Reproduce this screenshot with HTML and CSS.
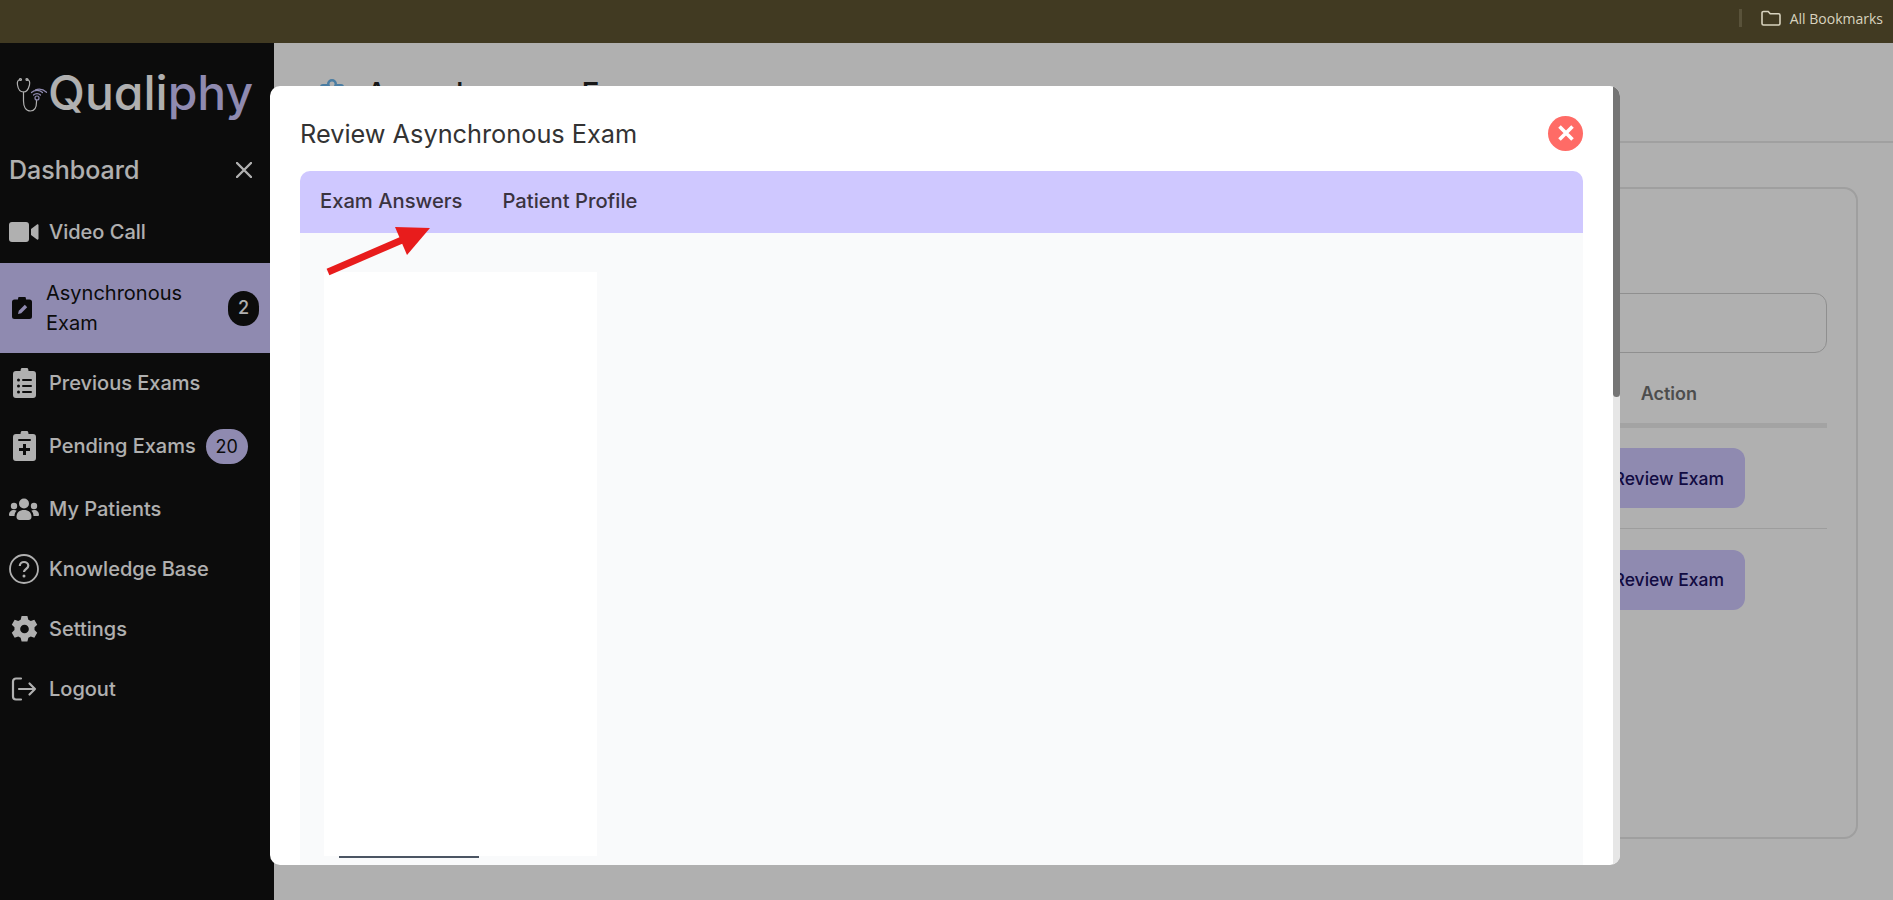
FILE: index.html
```html
<!DOCTYPE html>
<html lang="en">
<head>
<meta charset="utf-8">
<title>Qualiphy - Asynchronous Exam</title>
<link rel="stylesheet" href="styles.css">
</head>
<body>
<div class="bookmarks">
  <span class="bm-sep"></span>
  <svg class="bm-folder" viewBox="0 0 20 16" width="20" height="16"><path d="M1 3a1.500 1.500 0 0 1 1.500-1.500h4.700l2 2.200h8.300a1.500 1.500 0 0 1 1.500 1.500v8.300a1.500 1.500 0 0 1-1.500 1.500h-15a1.500 1.500 0 0 1-1.500-1.500z" fill="none" stroke="currentColor" stroke-width="1.600"/></svg>
  <span class="bm-label">All Bookmarks</span>
</div>
<div class="app">
  <aside class="sidebar">
    <div class="logo">
      <svg class="logo-mark" viewBox="0 0 32 36" width="32" height="36">
        <g fill="none" stroke="#fff" stroke-width="1.200" stroke-linecap="round">
          <path d="M4 2.500C1.500 3 1 5 1.500 8c.6 4 3 7 6 7s5-3 6-7c.6-3 0-5-2.500-5.500"/>
          <path d="M7.500 15v9c0 5 2 10 7 10s6-4 6-9v-2"/>
          <circle cx="4.500" cy="2.500" r="1"/><circle cx="11" cy="2.500" r="1"/>
        </g>
        <g fill="none" stroke="#cfc8ff" stroke-width="1.200" stroke-linecap="round">
          <circle cx="21" cy="21" r="2"/>
          <path d="M17.500 18a5 5 0 0 1 7 0"/><path d="M15.500 15.500a8 8 0 0 1 11 0"/><path d="M19.500 12.800a11 11 0 0 1 11 2.500"/>
        </g>
      </svg>
      <span class="logo-text">Quali<span class="logo-accent">phy</span></span>
    </div>
    <div class="dash-row">
      <span class="dash-title">Dashboard</span>
      <svg class="dash-close" viewBox="0 0 16 16" width="16" height="16"><path d="M1 1l14 14M15 1L1 15" stroke="currentColor" stroke-width="2.400" stroke-linecap="round"/></svg>
    </div>
    <nav class="nav">
      <a class="nav-item">
        <span class="nav-icon"><svg viewBox="0 0 30 20" width="30" height="20"><rect x="0" y="0" width="20" height="20" rx="3" fill="currentColor"/><path d="M22 7l6-4.500c.8-.5 1.500 0 1.500 1v13c0 1-.7 1.500-1.500 1L22 13z" fill="currentColor"/></svg></span>
        <span>Video Call</span>
      </a>
      <a class="nav-item nav-active">
        <span class="nav-icon nav-icon-active"><svg viewBox="0 0 20 22" width="20" height="22"><path d="M2.500 2.500H6a4 4 0 0 1 8 0h3.500A2.500 2.500 0 0 1 20 5v14.500a2.500 2.500 0 0 1-2.500 2.500h-15A2.500 2.500 0 0 1 0 19.500V5a2.500 2.500 0 0 1 2.500-2.500z" fill="currentColor"/><path d="M6 17l.8-3.200 6-6 2.400 2.400-6 6z" fill="#cfc8ff"/></svg></span>
        <span class="nav-label-wrap">Asynchronous Exam</span>
        <span class="badge badge-dark">2</span>
      </a>
      <a class="nav-item">
        <span class="nav-icon"><svg viewBox="0 0 23 30" width="23" height="30"><path d="M3 3h4.500a4 4 0 0 1 8 0H20a3 3 0 0 1 3 3v21a3 3 0 0 1-3 3H3a3 3 0 0 1-3-3V6a3 3 0 0 1 3-3z" fill="currentColor"/><g fill="#121212"><circle cx="5.500" cy="12" r="1.500"/><circle cx="5.500" cy="18" r="1.500"/><circle cx="5.500" cy="24" r="1.500"/><rect x="9" y="11" width="10" height="2" rx="1"/><rect x="9" y="17" width="10" height="2" rx="1"/><rect x="9" y="23" width="10" height="2" rx="1"/></g></svg></span>
        <span>Previous Exams</span>
      </a>
      <a class="nav-item nav-pending">
        <span class="nav-icon"><svg viewBox="0 0 23 30" width="23" height="30"><path d="M3 3h4.500a4 4 0 0 1 8 0H20a3 3 0 0 1 3 3v21a3 3 0 0 1-3 3H3a3 3 0 0 1-3-3V6a3 3 0 0 1 3-3z" fill="currentColor"/><g fill="#121212"><rect x="5" y="8" width="13" height="2" rx="1"/><path d="M10 13h3v4h4v3h-4v4h-3v-4H6v-3h4z"/></g></svg></span>
        <span>Pending Exams</span>
        <span class="badge badge-light">20</span>
      </a>
      <a class="nav-item">
        <span class="nav-icon"><svg viewBox="0 0 30 22" width="30" height="22"><g fill="currentColor"><circle cx="15" cy="5.500" r="5"/><circle cx="5" cy="8" r="3.200"/><circle cx="25" cy="8" r="3.200"/><path d="M7.500 19c0-4.500 3-7 7.500-7s7.500 2.500 7.500 7c0 2-1.500 3-3 3h-9c-1.500 0-3-1-3-3z"/><path d="M0 17c0-3 2-5 5-5 1 0 2 .3 2.700.8C6.300 14 5.500 16 5.500 18H1.500C.6 18 0 17.800 0 17zM30 17c0-3-2-5-5-5-1 0-2 .3-2.700.8 1.400 1.200 2.200 3.200 2.200 5.200h4c.9 0 1.500-.2 1.500-1z"/></g></svg></span>
        <span>My Patients</span>
      </a>
      <a class="nav-item">
        <span class="nav-icon"><svg viewBox="0 0 30 30" width="30" height="30"><circle cx="15" cy="15" r="14" fill="none" stroke="currentColor" stroke-width="1.800"/><path d="M10.800 12c0-2.500 2-4 4.200-4s4.300 1.500 4.300 3.800c0 3.200-4.300 3.200-4.300 6.200" fill="none" stroke="currentColor" stroke-width="2.200"/><circle cx="15" cy="22" r="1.500" fill="currentColor"/></svg></span>
        <span>Knowledge Base</span>
      </a>
      <a class="nav-item">
        <span class="nav-icon"><svg viewBox="0 0 28 28" width="27" height="28"><path fill-rule="evenodd" fill="currentColor" d="M11 .5h6l1 3.800 2.500 1.300 3.700-1.200 3 5.200-2.800 2.700v2.800l2.800 2.700-3 5.200-3.700-1.200-2.500 1.300-1 3.800h-6l-1-3.800-2.500-1.300-3.700 1.200-3-5.200 2.800-2.700v-2.800L.8 9.600l3-5.200 3.700 1.200L10 4.300zM14 9.500a4.500 4.500 0 1 0 0 9 4.500 4.500 0 0 0 0-9z"/></svg></span>
        <span>Settings</span>
      </a>
      <a class="nav-item">
        <span class="nav-icon"><svg viewBox="0 0 26 24" width="26" height="24"><g fill="none" stroke="currentColor" stroke-width="2.200" stroke-linecap="round" stroke-linejoin="round"><path d="M10 1.500H5a3 3 0 0 0-3 3v15a3 3 0 0 0 3 3h5"/><path d="M8 12h16M18.500 6.500L24 12l-5.500 5.500"/></g></svg></span>
        <span>Logout</span>
      </a>
    </nav>
  </aside>
  <main class="main">
    <header class="page-head">
      <svg class="page-icon" viewBox="0 0 24 30" width="24" height="30"><path d="M3 6h4a5 5 0 0 1 10 0h4a3 3 0 0 1 3 3v18a3 3 0 0 1-3 3H3a3 3 0 0 1-3-3V9a3 3 0 0 1 3-3z" fill="#6cb6ec"/><circle cx="12" cy="6" r="2.500" fill="#fff"/></svg>
      <h1 class="page-title">Asynchronous Exam</h1>
    </header>
    <section class="card">
      <div class="search-box"></div>
      <div class="table-head"><span class="th-action">Action</span></div>
      <div class="table-row"><button class="review-btn">Review Exam</button></div>
      <div class="table-row"><button class="review-btn">Review Exam</button></div>
    </section>
  </main>
  <div class="overlay">
    <div class="modal">
      <div class="modal-scroll">
        <div class="modal-head">
          <h2 class="modal-title">Review Asynchronous Exam</h2>
          <span class="modal-close"><svg viewBox="0 0 16 16" width="16" height="16"><path d="M1.500 1.500l13 13M14.500 1.500l-13 13" stroke="#fff" stroke-width="3.600"/></svg></span>
        </div>
        <div class="tabs"><span class="tab">Exam Answers</span><span class="tab">Patient Profile</span></div>
        <div class="tab-body">
          <div class="answer-sheet"></div>
          <div class="answer-rule"></div>
        </div>
      </div>
      <div class="scrollbar"><div class="scroll-thumb"></div></div>
    </div>
    <svg class="arrow" viewBox="0 0 110 50" width="110" height="50"><path d="M2 46L76 14" stroke="#e81c1c" stroke-width="7" fill="none"/><path d="M69 1l35 1-23 27z" fill="#e81c1c"/></svg>
  </div>
</div>
</body>
</html>
```
FILE: styles.css
```css
* { box-sizing: border-box; }
html, body { margin: 0; height: 100%; overflow: hidden; }
body { font-family: Inter, "Liberation Sans", sans-serif; background: #fff; display: flex; flex-direction: column; }

.bookmarks { height: 43px; flex: none; background: #413a22; color: #d8d3bf; display: flex; align-items: center; justify-content: flex-end; padding: 0 10px 7px 0; font-family: "Open Sans", "Liberation Sans", sans-serif; font-size: 14px; }
.bm-sep { width: 3px; height: 18px; background: #59523a; margin-right: 19px; }
.bm-folder { margin-right: 9px; }

.app { flex: 1; display: flex; position: relative; min-height: 0; }

.sidebar { width: 274px; flex: none; background: #121212; color: #fff; }
.logo { display: flex; align-items: center; padding: 13px 0 0 16px; height: 86px; }
.logo-mark { flex: none; margin-top: 4px; }
.logo-text { font-size: 48px; font-weight: 500; line-height: 50px; font-feature-settings: "cv11" 1; }
.logo-accent { color: #cfc8ff; }
.dash-row { display: flex; align-items: center; justify-content: space-between; padding: 23px 22px 0 9px; }
.dash-title { font-size: 25px; font-weight: 500; line-height: 36px; }
.nav { margin-top: 14px; font-size: 20px; font-weight: 500; display: flex; flex-direction: column; }
.nav-item { display: flex; align-items: center; min-height: 60px; padding-left: 9px; gap: 10px; }
.nav-pending { min-height: 66px; }
.nav-icon { width: 30px; flex: none; display: flex; justify-content: center; align-items: center; }
.nav-active { background: #cfc8ff; color: #111; font-weight: 400; min-height: 90px; margin-top: 1px; padding: 15px 15px 15px 12px; gap: 14px; line-height: 30px; }
.nav-icon-active { width: 20px; }
.nav-label-wrap { flex: 1; }
.badge { height: 35px; display: flex; align-items: center; justify-content: center; border-radius: 18px; font-size: 18px; font-weight: 400; }
.badge-dark { width: 31px; background: #121212; color: #fff; font-weight: 500; }
.badge-light { width: 42px; background: #cfc8ff; color: #111; }

.main { flex: 1; min-width: 0; background: #fff; }
.page-head { height: 100px; border-bottom: 2px solid #e8e8e8; display: flex; align-items: flex-start; padding: 32px 0 0 46px; gap: 22px; }
.page-icon { flex: none; margin-top: 3px; }
.page-title { margin: 0; font-size: 30px; font-weight: 500; color: #222; line-height: 36px; }
.card { margin: 44px 35px 0 72px; height: 652px; border: 2px solid #e6e6e6; border-radius: 14px; padding: 104px 29px 0 30px; }
.search-box { height: 60px; border: 1px solid #cfcfcf; border-radius: 12px; }
.table-head { height: 75px; border-bottom: 5px solid #ececec; display: flex; justify-content: flex-end; padding: 30px 130px 0 0; }
.th-action { font-size: 18px; font-weight: 600; color: #707070; }
.table-row { height: 101px; border-bottom: 1px solid #e4e4e4; display: flex; justify-content: flex-end; align-items: center; padding-right: 82px; }
.table-row:last-child { border-bottom: 0; }
.review-btn { width: 180px; height: 60px; border: 0; border-radius: 12px; background: #cfc8ff; color: #1a1060; font: 500 17.500px Inter, "Liberation Sans", sans-serif; text-align: right; padding: 0 21px 0 0; }

.overlay { position: absolute; inset: 0; background: rgba(0, 0, 0, 0.31); padding: 43px 0 0 270px; }
.modal { width: 1350px; height: 779px; background: #fff; border-radius: 10px; display: flex; overflow: hidden; }
.modal-scroll { flex: 1; min-width: 0; padding: 0 30px; display: flex; flex-direction: column; }
.modal-head { height: 85px; display: flex; align-items: center; justify-content: space-between; padding-top: 9px; }
.modal-title { margin: 0; font-size: 25.300px; font-weight: 400; color: #333; }
.modal-close { width: 35px; height: 35px; border-radius: 50%; background: #ff6b66; display: flex; align-items: center; justify-content: center; }
.tabs { height: 62px; flex: none; background: #cfc8ff; border-radius: 10px 10px 0 0; display: flex; align-items: center; padding: 0 20px 3px; gap: 40px; }
.tab { font-size: 20.200px; font-weight: 500; color: #3a3340; }
.tab-body { flex: 1; background: #f9fafb; padding: 39px 0 0 24px; }
.answer-sheet { width: 273px; height: 584px; background: #fff; }
.answer-rule { width: 140px; height: 2px; background: #4b5563; margin-left: 15px; }
.scrollbar { width: 7px; flex: none; background: #e6e6e6; }
.scroll-thumb { height: 311px; background: #757575; border-radius: 0 0 4px 4px; }
.arrow { position: absolute; left: 326px; top: 183px; }
```
